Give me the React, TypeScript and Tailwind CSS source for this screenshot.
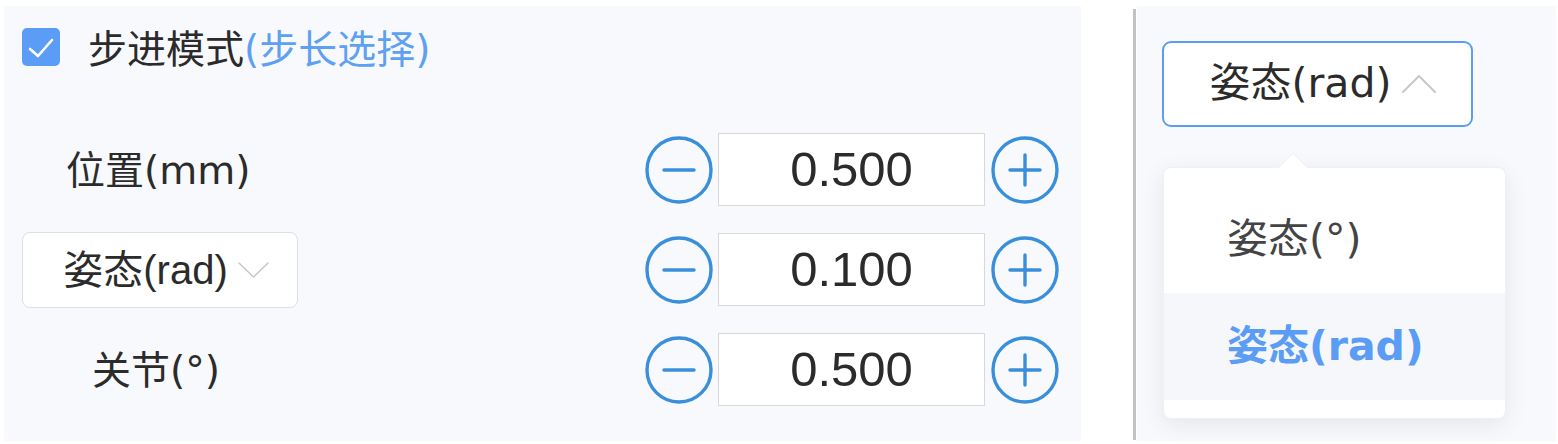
import { useState } from 'react';

const CJK = { fontFamily: '"DejaVu Sans", "Noto Sans CJK SC", sans-serif' };
const NUM = { fontFamily: '"Liberation Sans", "Noto Sans CJK SC", sans-serif' };

function CircleBtn({ plus }: { plus?: boolean }) {
  return (
    <button className="shrink-0 w-[68px] h-[68px] flex items-center justify-center">
      <svg width="68" height="68" viewBox="0 0 68 68" fill="none" stroke="#3a8fdb" strokeWidth="3.4" strokeLinecap="round">
        <circle cx="34" cy="34" r="32" />
        <line x1="19" y1="34" x2="49" y2="34" />
        {plus && <line x1="34" y1="19" x2="34" y2="49" />}
      </svg>
    </button>
  );
}

function Stepper({ value }: { value: string }) {
  return (
    <div className="flex items-center ml-auto">
      <CircleBtn />
      <div
        className="ml-[5px] w-[267px] h-[73px] border-[1.5px] border-[#d8d8d8] bg-white flex items-center justify-center text-[49px] text-[#2b2b2b]"
        style={NUM}
      >
        {value}
      </div>
      <div className="ml-[6px]">
        <CircleBtn plus />
      </div>
    </div>
  );
}

function Chevron({ up, w, h, color, sw }: { up?: boolean; w: number; h: number; color: string; sw: number }) {
  return (
    <svg width={w} height={h} viewBox={`0 0 ${w} ${h}`} fill="none" stroke={color} strokeWidth={sw} strokeLinejoin="round" strokeLinecap="round">
      {up ? (
        <polyline points={`1,${h - 1} ${w / 2},1 ${w - 1},${h - 1}`} />
      ) : (
        <polyline points={`1,1 ${w / 2},${h - 1} ${w - 1},1`} />
      )}
    </svg>
  );
}

export default function App() {
  const [stepMode, setStepMode] = useState(true);
  const [unit, setUnit] = useState('姿态(rad)');

  return (
    <div className="w-[1558px] h-[444px] bg-white flex" style={CJK}>
      {/* 左侧面板 */}
      <div className="ml-[4px] mt-[6px] w-[1077px] h-[435px] bg-[#f8f9fd] pt-[22px] pl-[18px] pr-[22px]">
        <label className="flex items-center h-[38px] cursor-pointer">
          <button
            onClick={() => setStepMode((s) => !s)}
            className={`w-[38px] h-[38px] rounded-[5px] flex items-center justify-center ${
              stepMode ? 'bg-[#5a9cf6]' : 'bg-white border border-[#dcdfe6]'
            }`}
          >
            {stepMode && (
              <svg width="38" height="38" viewBox="0 0 38 38" fill="none" stroke="white" strokeWidth="2.6" strokeLinecap="round" strokeLinejoin="round">
                <polyline points="8,21 16,28 30,12" />
              </svg>
            )}
          </button>
          <span className="ml-[28px] mt-[4px] text-[39px] text-[#2b2b2b] leading-none whitespace-nowrap">
            步进模式<span className="text-[#5ea1f2]">(步长选择)</span>
          </span>
        </label>

        <div className="mt-[67px] flex flex-col gap-[27px]">
          <div className="flex items-center h-[73px]">
            <span className="pl-[44px] pt-[4px] text-[39px] text-[#2b2b2b] whitespace-nowrap">位置(mm)</span>
            <Stepper value="0.500" />
          </div>
          <div className="flex items-center h-[73px]">
            <div className="w-[276px] h-[76px] rounded-[8px] border-[1.5px] border-[#dcdfe6] bg-white flex items-center justify-center pl-[12px] gap-[10px]">
              <span className="text-[40px] text-[#2b2b2b] whitespace-nowrap" style={NUM}>姿态(rad)</span>
              <Chevron w={31} h={16} color="#c4c7cc" sw={1.5} />
            </div>
            <Stepper value="0.100" />
          </div>
          <div className="flex items-center h-[73px]">
            <span className="pl-[70px] pt-[4px] text-[39px] text-[#2b2b2b] whitespace-nowrap">关节(°)</span>
            <Stepper value="0.500" />
          </div>
        </div>
      </div>

      {/* 分隔线 */}
      <div className="ml-[52px] mt-[9px] w-[3px] h-[431px] bg-[#c2c2c2]" />

      {/* 右侧下拉 */}
      <div className="ml-[1px] mt-[6px] w-[419px] h-[435px] bg-[#f8f9fd] pt-[35px] pl-[25px]">
        <div className="w-[311px] h-[86px] rounded-[9px] border-2 border-[#5b9cf5] bg-white flex items-center justify-center pl-[10px] gap-[10px]">
          <span className="text-[41px] text-[#2b2b2b] whitespace-nowrap">{unit}</span>
          <Chevron up w={34} h={18} color="#c4c7cc" sw={2} />
        </div>

        <div className="relative mt-[40px] ml-[1px] w-[343px] rounded-[8px] bg-white border border-[#eef0f4] shadow-[0_6px_24px_rgba(0,0,0,0.08)] py-[18px]">
          <div className="absolute -top-[11px] left-[118px] w-[22px] h-[22px] rotate-45 bg-white border-l border-t border-[#eef0f4]" />
          {['姿态(°)', '姿态(rad)'].map((opt) => (
            <button
              key={opt}
              onClick={() => setUnit(opt)}
              className={`relative w-full h-[107px] flex items-center pl-[63px] text-[41px] whitespace-nowrap ${
                unit === opt ? 'bg-[#f5f7fa] text-[#5b9cf5] font-bold' : 'text-[#444444]'
              }`}
            >
              {opt}
            </button>
          ))}
        </div>
      </div>
    </div>
  );
}
